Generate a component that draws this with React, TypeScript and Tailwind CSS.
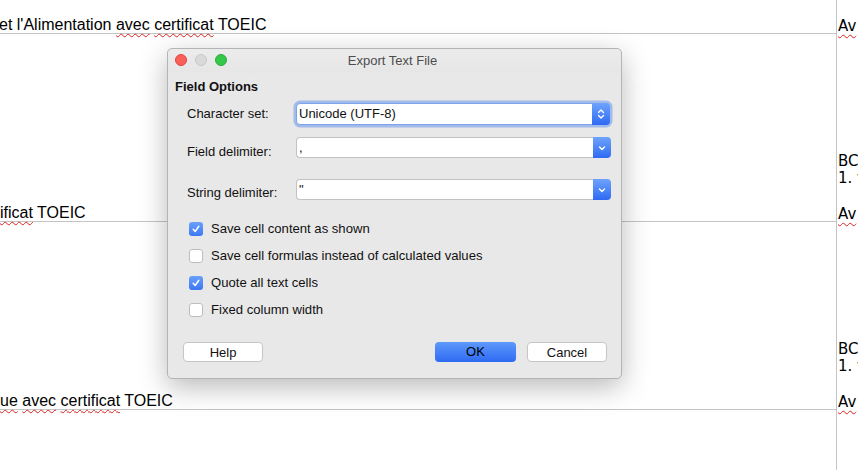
import React from "react";

const sq = "underline decoration-wavy decoration-[#d22] decoration-[1px] underline-offset-[3px]";

function Chevron({ both }: { both?: boolean }) {
  return (
    <svg width="10" height="14" viewBox="0 0 10 14" fill="none" stroke="white" strokeWidth="1.4" strokeLinecap="round" strokeLinejoin="round">
      {both ? (
        <>
          <path d="M2.5 5.5 L5 3 L7.5 5.5" />
          <path d="M2.5 8.5 L5 11 L7.5 8.5" />
        </>
      ) : (
        <path d="M2.5 6 L5 8.5 L7.5 6" />
      )}
    </svg>
  );
}

function Select({ value, focused, both }: { value: string; focused?: boolean; both?: boolean }) {
  return (
    <div
      className={
        "relative flex w-[314px] bg-white rounded-[4px] " +
        (focused
          ? "h-[22px] border border-[#7ba4ea] shadow-[0_0_0_2.5px_rgba(104,150,236,0.55)]"
          : "h-[21px] border border-[#c2c2c2] border-r-0")
      }
    >
      <div className="flex-1 flex items-center pl-[2px] text-[13px] text-[#111]">{value}</div>
      <div className="w-[18px] -my-[1px] -mr-[1px] rounded-r-[4px] bg-gradient-to-b from-[#6ea3fb] to-[#2f69f3] flex items-center justify-center">
        <Chevron both={both} />
      </div>
    </div>
  );
}

function Check({ checked, label }: { checked?: boolean; label: string }) {
  return (
    <div className="flex items-center h-[27px] pl-[21px]">
      {checked ? (
        <div className="w-[14px] h-[14px] rounded-[3px] bg-gradient-to-b from-[#6aa0fb] to-[#3c77f4] flex items-center justify-center">
          <svg width="10" height="10" viewBox="0 0 10 10" fill="none" stroke="white" strokeWidth="1.5" strokeLinecap="round" strokeLinejoin="round">
            <path d="M2.2 5.3 L4.2 7.5 L7.8 2.3" />
          </svg>
        </div>
      ) : (
        <div className="w-[14px] h-[14px] rounded-[3px] bg-white border border-[#bdbdbd]" />
      )}
      <span className="ml-[8px] text-[13.1px] text-[#111]">{label}</span>
    </div>
  );
}

export default function App() {
  return (
    <div
      className="relative w-[858px] h-[470px] bg-white overflow-hidden"
      style={{ fontFamily: '"Liberation Sans", Arial, sans-serif' }}
    >
      <div className="flex h-full">
        <div className="w-[837px] border-r border-[#c4c4c4] flex flex-col text-[16px] text-black">
          <div className="h-[34px] border-b border-[#c4c4c4] flex items-end leading-[16px] -ml-[1px]">
            <span className="whitespace-nowrap">
              et l'Alimentation <span className={sq}>avec</span> <span className={sq}>certificat</span> TOEIC
            </span>
          </div>
          <div className="h-[188px] border-b border-[#c4c4c4] flex items-end leading-[16px]">
            <span className="whitespace-nowrap">
              <span className={sq}>ificat</span> TOEIC
            </span>
          </div>
          <div className="h-[188px] border-b border-[#c4c4c4] flex items-end leading-[16px]">
            <span className="whitespace-nowrap">
              <span className={sq}>ue</span> <span className={sq}>avec</span> <span className={sq}>certificat</span> TOEIC
            </span>
          </div>
          <div className="flex-1" />
        </div>
        <div
          className="flex-1 flex flex-col pl-[1px] text-[15px] text-black overflow-hidden whitespace-nowrap leading-[16px]"
          style={{ fontFamily: '"DejaVu Sans", sans-serif' }}
        >
          <div className="h-[34px] flex items-end">
            <span className={sq}>Av</span>
          </div>
          <div className="h-[188px] flex flex-col justify-end">
            <div className="leading-[17px]">BC</div>
            <div className="leading-[17px]">1. v</div>
            <div className="h-[19px]" />
            <div>
              <span className={sq}>Av</span>
            </div>
          </div>
          <div className="h-[188px] flex flex-col justify-end">
            <div className="leading-[17px]">BC</div>
            <div className="leading-[17px]">1. v</div>
            <div className="h-[19px]" />
            <div>
              <span className={sq}>Av</span>
            </div>
          </div>
        </div>
      </div>

      {/* Dialog */}
      <div className="absolute left-[167px] top-[48px] w-[455px] h-[331px] rounded-[5px] bg-[#e8e8e8] border border-[#b4b4b4] shadow-[0_8px_28px_rgba(0,0,0,0.28)] flex flex-col text-[13px]">
        <div className="relative h-[24px] flex items-center justify-center rounded-t-[5px] bg-gradient-to-b from-[#ececec] to-[#e6e6e6]">
          <div className="absolute left-[7px] top-[5px] flex gap-[8px]">
            <div className="w-[12px] h-[12px] rounded-full bg-[#fc5f57] border border-[#e0443e]" />
            <div className="w-[12px] h-[12px] rounded-full bg-[#d9d9d9] border border-[#c8c8c8]" />
            <div className="w-[12px] h-[12px] rounded-full bg-[#34c84a] border border-[#2aac3a]" />
          </div>
          <span className="text-[#4d4d4d] ml-[-4px]">Export Text File</span>
        </div>
        <div className="mt-[6px] pl-[7px] font-bold leading-[16px] text-[#111]">Field Options</div>
        <div className="mt-[8px] flex items-center pl-[19px]">
          <span className="w-[109px] text-[#111]">Character set:</span>
          <Select value="Unicode (UTF-8)" focused both />
        </div>
        <div className="mt-[12px] flex items-start pl-[19px]">
          <span className="w-[109px] mt-[7px] leading-[16px] text-[#111]">Field delimiter:</span>
          <Select value="," />
        </div>
        <div className="mt-[19px] flex items-start pl-[19px]">
          <span className="w-[109px] mt-[6px] leading-[16px] text-[#111]">String delimiter:</span>
          <Select value={'"'} />
        </div>
        <div className="mt-[14px] flex flex-col">
          <Check checked label="Save cell content as shown" />
          <Check label="Save cell formulas instead of calculated values" />
          <Check checked label="Quote all text cells" />
          <Check label="Fixed column width" />
        </div>
        <div className="mt-[19px] flex items-center pl-[15px] pr-[14px]">
          <button className="w-[80px] h-[20px] rounded-[4px] bg-white border border-[#c6c6c6] text-[13px] text-[#111]">Help</button>
          <div className="flex-1" />
          <button className="w-[81px] h-[20px] rounded-[4px] bg-gradient-to-b from-[#5e98fb] to-[#2e6af3] text-[13px] text-black">OK</button>
          <button className="ml-[11px] w-[80px] h-[20px] rounded-[4px] bg-white border border-[#c6c6c6] text-[13px] text-[#111]">Cancel</button>
        </div>
      </div>
    </div>
  );
}
